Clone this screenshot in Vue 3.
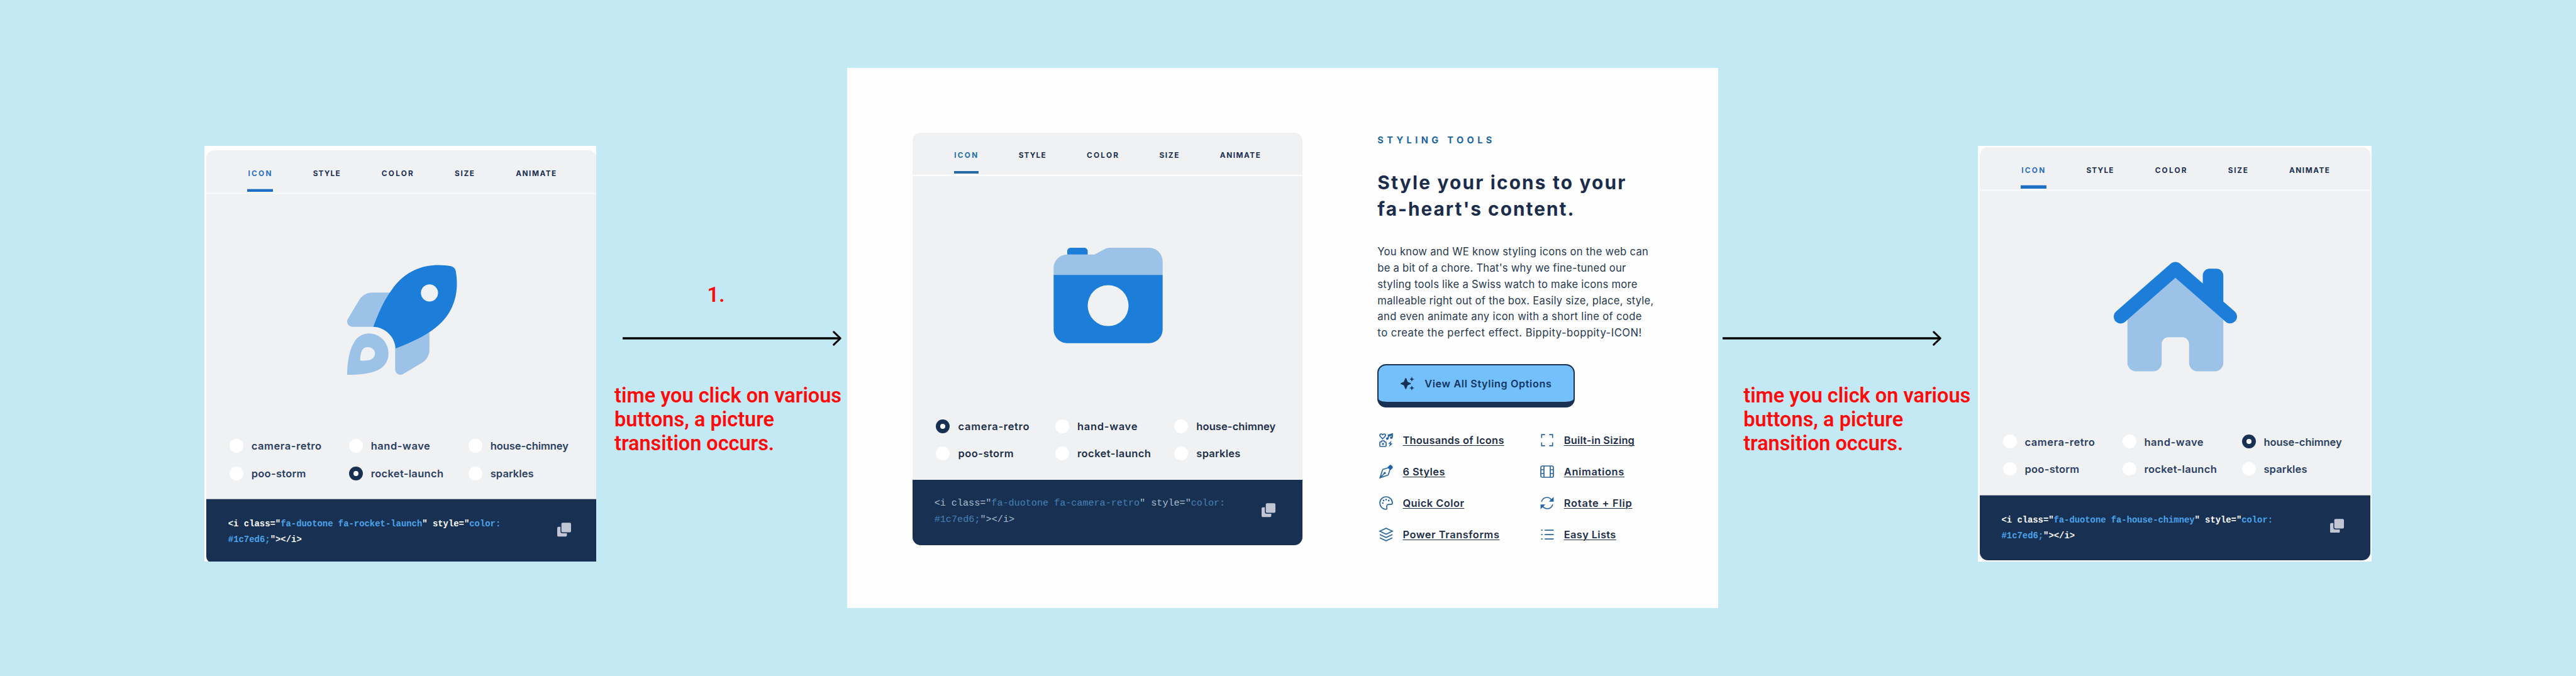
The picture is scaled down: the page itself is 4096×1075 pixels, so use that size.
<script setup>
const tabs = [
  { label: 'ICON', w: 37 },
  { label: 'STYLE', w: 43 },
  { label: 'COLOR', w: 50 },
  { label: 'SIZE', w: 31 },
  { label: 'ANIMATE', w: 64 },
]

const options = [
  { name: 'camera-retro', w: 113 },
  { name: 'hand-wave', w: 95.5 },
  { name: 'house-chimney', w: 126 },
  { name: 'poo-storm', w: 88 },
  { name: 'rocket-launch', w: 117 },
  { name: 'sparkles', w: 70 },
]

const before = { kind: 'rocket', picked: 'rocket-launch', codeW: 433.5, tailW: 117 }
const current = { kind: 'camera', picked: 'camera-retro', codeW: 462.5, tailW: 127.5 }
const after = { kind: 'house', picked: 'house-chimney', codeW: 431.5, tailW: 116.5 }
const slots = [
  { side: 'left', card: before },
  { side: 'middle', card: current },
  { side: 'right', card: after },
]

const note = [
  { text: 'time you click on various', w: 361 },
  { text: 'buttons, a picture', w: 254 },
  { text: 'transition occurs.', w: 254 },
]

const headline = [
  { text: 'Style your icons to your', w: 394 },
  { text: "fa-heart's content.", w: 312 },
]

const paragraph = [
  { text: 'You know and WE know styling icons on the web can', w: 430.5 },
  { text: "be a bit of a chore. That's why we fine-tuned our", w: 395 },
  { text: 'styling tools like a Swiss watch to make icons more', w: 413 },
  { text: 'malleable right out of the box. Easily size, place, style,', w: 439 },
  { text: 'and even animate any icon with a short line of code', w: 420 },
  { text: 'to create the perfect effect. Bippity-boppity-ICON!', w: 420 },
]

const links = [
  { icon: 'icons', text: 'Thousands of Icons', w: 161 },
  { icon: 'expand', text: 'Built-in Sizing', w: 112 },
  { icon: 'pen', text: '6 Styles', w: 67 },
  { icon: 'film', text: 'Animations', w: 95.5 },
  { icon: 'palette', text: 'Quick Color', w: 97.5 },
  { icon: 'rotate', text: 'Rotate + Flip', w: 108 },
  { icon: 'layers', text: 'Power Transforms', w: 153.5 },
  { icon: 'list', text: 'Easy Lists', w: 82.5 },
]

// Tracks a single line of text out to the given measure in pixels.
const vFit = {
  mounted(el, { value }) {
    const n = el.textContent.length
    const natural = el.getBoundingClientRect().width
    el.style.letterSpacing = `${(value - natural) / (n - 1)}px`
    el.style.marginRight = `${-(value - natural) / (n - 1)}px`
  },
}
</script>

<template>
  <main class="board">
    <template v-for="slot in slots" :key="slot.side">
      <div v-if="slot.side === 'right'" class="flow flow-right">
        <svg class="arrow" viewBox="0 0 349 26"><path d="M0 13H345" stroke-width="3.3" /><path d="M335.700 2.800L346.300 13L335.700 23.200" stroke-width="3" stroke-linecap="round" stroke-linejoin="round" /></svg>
        <p class="note"><span v-for="l in note" :key="l.text" class="line"><span v-fit="l.w" class="fit">{{ l.text }}</span></span></p>
      </div>

      <section :class="['frame', slot.side]">
        <article :class="['card', slot.card.kind]">
          <nav class="tabs">
            <a v-for="(t, i) in tabs" :key="t.label" :class="['tab', { active: i === 0 }]">
              <span v-fit="t.w" class="fit">{{ t.label }}</span>
            </a>
          </nav>

          <div class="preview">
            <svg v-if="slot.card.kind === 'rocket'" class="glyph" viewBox="0 0 512 512">
              <g class="soft">
                <path d="M210 128H117.700c-25.400 0-49 13.400-61.900 35.300L3.300 251.800c-4.400 7.400-4.500 16.600-.2 24.100S15.400 288 24 288h110z" />
                <path d="M224 380V488c0 8.600 4.600 16.600 12.100 20.900s16.700 4.200 24.100-.2l88.500-52.500c21.900-12.900 35.300-36.500 35.300-61.900V300z" />
                <path fill-rule="evenodd" d="M0 512C0 448 12 390 36 354C52 331 76 319 102 319C152 319 193 361 193 412C193 445 176 474 144 490C106 508 55 512 0 512zM61 446C61 423 64 404 73 393C78 386 87 383 96 383C115 383 130 397 130 413C130 424 124 434 112 440C100 446 80 446 61 446z" />
              </g>
              <path class="strong" fill-rule="evenodd" d="M122 288C146 222 173 164 207.200 116.700C289.100-4.100 411.100-8.100 483.900 5.300c11.600 2.100 20.600 11.200 22.800 22.800c13.400 72.900 9.300 194.800-111.400 276.700C350 337 290 364 226 389C223 335 177 289 122 288zM384 170a40 40 0 1 0 0-80a40 40 0 1 0 0 80z" />
            </svg>
            <svg v-else-if="slot.card.kind === 'camera'" class="glyph" viewBox="0 0 512 448">
              <path class="soft" d="M0 130V96C0 60.700 28.700 32 64 32H192L242 5.500C249 1.800 257 0 265 0H448c35.300 0 64 28.700 64 64V130z" />
              <path class="strong" fill-rule="evenodd" d="M64 32V16C64 7.200 71.200 0 80 0H144c8.800 0 16 7.200 16 16V32zM0 128H512V384c0 35.300-28.700 64-64 64H64c-35.300 0-64-28.700-64-64zM256 368a96 96 0 1 0 0-192a96 96 0 1 0 0 192z" />
            </svg>
            <svg v-else class="glyph" viewBox="0 0 576 512">
              <path class="soft" d="M64 262L288 66L512 262V472c0 22-18 40-40 40h-80c-22 0-40-18-40-40V384c0-17.700-14.300-32-32-32h-64c-17.700 0-32 14.300-32 32v88c0 22-18 40-40 40h-80c-22 0-40-18-40-40z" />
              <path class="strong" d="M266.900 7.900C279-2.600 297-2.600 309.100 7.900L416 101.200V64c0-17.700 14.300-32 32-32h32c17.700 0 32 14.300 32 32v121.200l53.100 46.500c13.300 11.600 14.600 31.900 3 45.200s-31.800 14.600-45.200 3L288 74.500L53.100 280.100c-13.300 11.600-33.500 10.300-45.200-3s-10.300-33.500 3-45.200z" />
            </svg>
          </div>

          <ul class="options">
            <li v-for="o in options" :key="o.name" class="option">
              <i :class="['radio', { on: o.name === slot.card.picked }]"></i>
              <span v-fit="slot.card.kind === 'camera' ? o.w : o.w * 0.986" class="fit">{{ o.name }}</span>
            </li>
          </ul>

          <footer class="code">
            <div class="snippet">
              <div><span v-fit="slot.card.codeW" class="fit">&lt;i class="<b>fa-duotone fa-{{ slot.card.picked }}</b>" style="<b>color:</b></span></div>
              <div><span v-fit="slot.card.tailW" class="fit"><b>#1c7ed6;</b>"&gt;&lt;/i&gt;</span></div>
            </div>
            <svg class="copy" viewBox="0 0 22 22"><path d="M0 8.400Q0 6.600 1.800 6.600H5.200V13.600Q5.200 16.800 8.400 16.800H15.400V20.200Q15.400 22 13.600 22H1.800Q0 22 0 20.200z" /><rect x="6.700" y="0" width="15.300" height="15.300" rx="2" /></svg>
          </footer>
        </article>

        <div v-if="slot.side === 'middle'" class="copytext">
          <p class="eyebrow"><span v-fit="182" class="fit">STYLING TOOLS</span></p>
          <h1 class="headline"><span v-for="l in headline" :key="l.text" class="line"><span v-fit="l.w" class="fit">{{ l.text }}</span></span></h1>
          <p class="lead"><span v-for="l in paragraph" :key="l.text" class="line"><span v-fit="l.w" class="fit">{{ l.text }}</span></span></p>
          <a class="cta">
            <svg class="spark" viewBox="0 0 22 22"><path d="M8.200 2.200Q9 2.200 9.300 3L11.200 8.200L15.900 10.200Q16.500 10.600 16.500 11Q16.500 11.500 15.900 11.800L11.200 13.800L9.300 19Q9 19.700 8.200 19.700Q7.500 19.700 7.200 19L5.200 13.800L.500 11.800Q0 11.500 0 11Q0 10.600 .500 10.200L5.200 8.200L7.200 3Q7.500 2.200 8.200 2.200z" /><path d="M17.900 0L19 2.900L22 4L19 5.100L17.900 8L16.800 5.100L13.900 4L16.800 2.900zM17.900 14L19 16.900L22 18L19 19.100L17.900 22L16.800 19.100L13.900 18L16.800 16.900z" /></svg>
            <span v-fit="201.500" class="fit">View All Styling Options</span>
          </a>
          <ul class="links">
            <li v-for="l in links" :key="l.text" class="link">
              <svg class="li-icon" viewBox="0 0 22 22">
                <g v-if="l.icon === 'icons'">
                  <path d="M5.500 8.800L1.700 5Q.2 3 1.700 1.500Q3.600 .2 5.500 2.500Q7.400 .2 9.300 1.500Q10.800 3 9.300 5z" />
                  <path d="M14.500 8.200V3L21 1V6.800M14.500 4.600L21 2.600" />
                  <circle class="solid" cx="12.900" cy="8.600" r="2" /><circle class="solid" cx="19.200" cy="7" r="2" />
                  <path d="M2.400 13.600H3.400L4.300 12H7.700L8.600 13.600H9.600Q11 13.600 11 15V19.600Q11 21 9.600 21H2.400Q1 21 1 19.600V15Q1 13.600 2.400 13.600z" />
                  <circle class="solid" cx="6" cy="17" r="1.700" />
                  <path class="solid" d="M19.500 11.800L14.200 16.800H17.300L15.600 21.800L21.500 16.200H18.300z" />
                </g>
                <g v-else-if="l.icon === 'pen'">
                  <path d="M14 5L6.500 7.300Q5.500 7.700 5.200 8.700L1.200 20.800L13.300 16.800Q14.300 16.500 14.700 15.500L17 8M1.200 20.800L7.600 14.400" />
                  <path class="solid" d="M13 4.300L16.300 1Q18 -.4 19.600 1L21 2.400Q22.400 4 21 5.700L17.700 9z" />
                  <circle class="solid" cx="8.800" cy="13.200" r="1.800" />
                </g>
                <g v-else-if="l.icon === 'palette'">
                  <path d="M11 1A10 10 0 0 0 1 11A10 10 0 0 0 10.500 21Q12.800 20.800 12.200 18.500Q11 13.500 15 13.200H18.500Q21 13.200 21 11A10 10 0 0 0 11 1z" />
                  <circle class="solid" cx="5.700" cy="11" r="1.300" /><circle class="solid" cx="7" cy="7" r="1.300" /><circle class="solid" cx="11" cy="5.500" r="1.300" /><circle class="solid" cx="15.200" cy="7" r="1.300" />
                </g>
                <g v-else-if="l.icon === 'layers'">
                  <path d="M11 1L21 5.800L11 10.600L1 5.800zM1 11L11 15.800L21 11M1 16.200L11 21L21 16.200" />
                </g>
                <g v-else-if="l.icon === 'expand'">
                  <path d="M2.300 7.500V2.200H7.700M14.300 2.200H19.700V7.500M19.700 14.500V19.800H14.300M7.700 19.800H2.300V14.500" />
                </g>
                <g v-else-if="l.icon === 'film'">
                  <rect x="1" y="2" width="20" height="18" rx="2.500" /><path d="M6 2V20M16 2V20M1 8H6M1 14H6M16 8H21M16 14H21" />
                </g>
                <g v-else-if="l.icon === 'rotate'">
                  <path d="M2 8.800Q4.500 2 11 2Q15 2 18 5.500M20 13.200Q17.500 20 11 20Q7 20 4 16.500" />
                  <path class="solid" d="M21.400 1.200V8.800H13.800zM.6 20.800V13.200H8.200z" />
                </g>
                <g v-else>
                  <path d="M7.200 4.200H21.500M7.200 11.200H21.500M7.200 18.200H21.500" />
                  <path d="M1.500 4.200H3.800M1.500 11.200H3.800M1.500 18.200H3.800" />
                </g>
              </svg>
              <span v-fit="l.w" class="fit under">{{ l.text }}</span>
            </li>
          </ul>
        </div>
      </section>

      <div v-if="slot.side === 'left'" class="flow flow-left">
        <p class="step">1.</p>
        <svg class="arrow" viewBox="0 0 349 26"><path d="M0 13H345" stroke-width="3.3" /><path d="M335.700 2.800L346.300 13L335.700 23.200" stroke-width="3" stroke-linecap="round" stroke-linejoin="round" /></svg>
        <p class="note"><span v-for="l in note" :key="l.text" class="line"><span v-fit="l.w" class="fit">{{ l.text }}</span></span></p>
      </div>
    </template>
  </main>
</template>

<style>
body {
  margin: 0;
  background: #c3e9f4;
}
</style>

<style scoped>
.board {
  box-sizing: border-box;
  display: flex;
  align-items: flex-start;
  width: 4096px;
  height: 1075px;
  padding-left: 324.600px;
  overflow: hidden;
  background: #c3e9f4;
  color: #1b2f50;
  font-family: Inter, Lato, sans-serif;
}
p, h1, ul { margin: 0; padding: 0; }
ul { list-style: none; }
.fit { display: inline-block; white-space: nowrap; }
.line { display: block; white-space: nowrap; }

.frame { box-sizing: border-box; flex: none; background: #fff; overflow: hidden; }
.frame.left { width: 623.200px; height: 661.200px; margin-top: 231.600px; padding: 7.600px 0 0 3.700px; }
.frame.middle { display: flex; align-items: flex-start; width: 1385.200px; height: 858.600px; margin-top: 108.200px; padding: 0 0 0 103.900px; background: #fefefe; }
.frame.right { width: 626.100px; height: 661.400px; margin-top: 231.700px; padding: 2.100px 2.100px 2.200px 3.400px; }

.card { display: flex; flex-direction: column; flex: none; overflow: hidden; background: #eff1f3; border-radius: 13px; }
.card.rocket { width: 621px; height: 656px; border-radius: 13px 13px 0 10px; }
.card.camera { width: 619.900px; height: 655.700px; margin-top: 103px; }
.card.house { width: 620.600px; height: 657.100px; }

.tabs { box-sizing: border-box; flex: none; display: flex; gap: 66.200px; padding-left: 66.200px; height: 70.200px; border-bottom: 3.800px solid #f7f8fa; }
.camera .tabs { gap: 65.400px; height: 69.300px; border-bottom: 2.200px solid #fff; }
.tab { position: relative; font-size: 11.800px; font-weight: 700; line-height: 20px; padding-top: 27px; }
.camera .tab { padding-top: 25.800px; }
.tab.active { color: #2a6fc0; }
.camera .tab.active { color: #226fa8; }
.tab.active::after { content: ''; position: absolute; left: -1px; top: 60.500px; width: 40.400px; height: 5.600px; background: #1c6fc2; box-sizing: border-box; border-top: 1.500px solid #aac6e4; }
.camera .tab.active::after { left: 0; width: 39.200px; height: 4.500px; background: #246ba8; border: 0; }

.preview { flex: none; display: flex; justify-content: center; align-items: flex-start; height: 387.200px; padding-top: 112px; box-sizing: border-box; width: 622.600px; }
.camera .preview { padding-top: 113.700px; height: 386px; width: 622px; }
.glyph { display: block; }
.rocket .glyph { width: 174.500px; height: 175.500px; }
.camera .glyph { width: 174px; height: 151.700px; }
.house .glyph { width: 196px; height: 175px; }
.soft { fill: #9cc2e8; }
.strong { fill: #1d7ed9; }

.options { flex: none; display: grid; grid-template-columns: 190px 190px 190px; grid-auto-rows: 43.300px; padding-left: 37px; height: 96.600px; margin-top: -10.600px; }
.rocket .options { margin-top: -9.800px; grid-auto-rows: 43.900px; }
.camera .options { grid-template-columns: 189.400px 189.400px 189.400px; padding-left: 37.300px; margin-top: -10.500px; height: 107.100px; }
.option { display: flex; align-items: center; font-size: 16.500px; font-weight: 600; color: #2b3f62; gap: 12.600px; line-height: 20px; }
.option .fit { padding-top: 1px; }
.camera .option { color: #1d3049; gap: 13.400px; }
.radio { box-sizing: border-box; width: 21.800px; height: 21.800px; border-radius: 50%; background: #fff; }
.radio.on { border: 7px solid #183153; }

.code { flex: 1; display: flex; justify-content: space-between; align-items: flex-start; padding: 0 41.700px 0 34.500px; background: #183153; color: #fff; margin-top: 9.400px; border-top: 1.700px solid #a9b3c0; font: 700 13.900px/24.800px 'Liberation Mono', monospace; }
.camera .code { margin-top: 0; padding: 0 42.500px 0 34.600px; border: 0; font: 400 15.200px/25.900px 'Liberation Mono', monospace; color: #a9bccf; }
.code b { font-weight: inherit; color: #4ba3ea; }
.camera .code b { color: #4680b5; }
.snippet { padding-top: 27.500px; white-space: nowrap; }
.camera .snippet { padding-top: 25.400px; }
.copy { flex: none; width: 22px; height: 22.500px; margin-top: 37.300px; fill: #c2c6d4; }

.flow { display: flex; flex-direction: column; flex: none; align-items: flex-start; box-sizing: border-box; }
.flow-left { width: 399.400px; padding: 450px 0 0 29.300px; }
.flow-right { width: 412.300px; padding: 525px 0 0 6.500px; }
.arrow { display: block; width: 349px; height: 26px; margin-left: 13px; fill: none; stroke: #000; }
.flow-right .arrow { margin-left: 0; }
.step { margin-left: 147.500px; height: 75px; color: #ff0a0a; font: 600 32.470px/38px Roboto, sans-serif; }
.note { margin-top: 59.900px; color: #ff0a0a; font: 600 32.470px/37.900px Roboto, sans-serif; }
.flow-right .note { margin-left: 33.400px; }

.copytext { width: 480px; margin-left: 119.400px; padding-top: 104.600px; }
.eyebrow { height: 20px; line-height: 20px; font-size: 14.600px; font-weight: 700; color: #20659f; }
.headline { margin-top: 37.700px; font-size: 29.800px; line-height: 41.300px; font-weight: 700; color: #1b2d4b; }
.lead { margin-top: 34.900px; font-size: 16.600px; line-height: 25.880px; color: #27384d; }
.cta { box-sizing: border-box; display: flex; align-items: center; width: 314px; height: 69.400px; margin-top: 35.800px; padding-left: 34.500px; border: 2.400px solid #183153; border-bottom-width: 9px; border-radius: 14px; background: #183153 linear-gradient(#74c0fc, #74c0fc) padding-box; font-size: 16.200px; font-weight: 600; color: #123661; }
.spark { width: 22px; height: 22px; margin-right: 16.500px; fill: #183153; }
.links { display: grid; grid-template-columns: 256.400px 220px; grid-auto-rows: 49.750px; margin-top: 27.100px; padding-left: 2.500px; }
.link { display: flex; align-items: center; gap: 15.600px; font-size: 16.400px; font-weight: 600; color: #1e2f48; }
.under { text-decoration: underline; text-decoration-thickness: 1.300px; text-underline-offset: 2px; }
.li-icon { width: 22px; height: 22px; fill: none; stroke: #29669f; stroke-width: 1.700; overflow: visible; }
.solid { fill: #1f64ad; stroke: none; }
</style>
